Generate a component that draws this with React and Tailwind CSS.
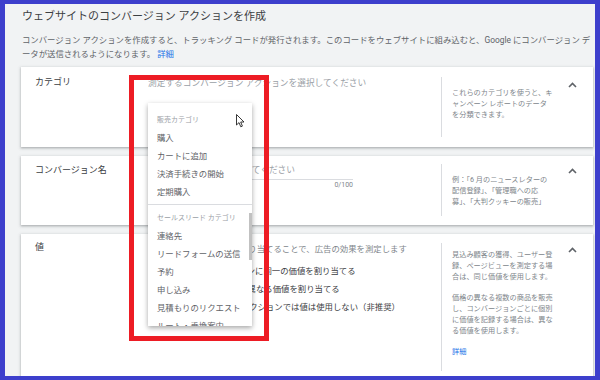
import React from 'react'

const salesItems = ['購入', 'カートに追加', '決済手続きの開始', '定期購入']
const leadItems = ['連絡先', 'リードフォームの送信', '予約', '申し込み', '見積もりのリクエスト', 'ルート・乗換案内']

function Chevron() {
    return (
        <svg width="9" height="6" viewBox="0 0 9 6" fill="none">
            <path d="M1 5 L4.5 1.5 L8 5" stroke="#5f6368" strokeWidth="1.6" />
        </svg>
    )
}

function Card({ className, label, labelPt, middle, help, dividerY, helpPt, chevronPt }) {
    return (
        <div className={`flex bg-white shadow-[0_1px_2px_rgba(60,64,67,0.3),0_1px_3px_1px_rgba(60,64,67,0.12)] ${className}`}>
            <div className={`w-[127px] shrink-0 pl-[14px] text-[9px] leading-[12px] text-[#3c4043] ${labelPt}`}>{label}</div>
            <div className="w-[293px] shrink-0">{middle}</div>
            <div className={`flex flex-1 justify-between border-l border-[#dadce0] pr-[16px] ${dividerY}`}>
                <div className={`pl-[10px] text-[7.2px] leading-[11px] text-[#80868b] whitespace-nowrap ${helpPt}`}>{help}</div>
                <div className={chevronPt}><Chevron /></div>
            </div>
        </div>
    )
}

function Radio({ text }) {
    return (
        <div className="flex h-[18px] items-center">
            <div className="mr-[6px] h-[10px] w-[10px] rounded-full border border-[#5f6368]"></div>
            <span className="text-[8.4px] text-[#3c4043]">{text}</span>
        </div>
    )
}

export default function App() {
    return (
        <div className="relative h-[380px] w-[600px] overflow-hidden border-x-[5px] border-y-[4px] border-[#3d3fcc] bg-[#f1f3f4] font-['Roboto','Noto_Sans_CJK_JP',sans-serif]">
            <div className="pl-[16px] pr-[2px]">
                <div className="pl-[1px] pt-[6px] text-[11px] leading-[14px] text-[#3c4043] whitespace-nowrap">
                    ウェブサイトのコンバージョン アクションを作成
                </div>
                <div className="mt-[10px] pl-[1px] text-[8.4px] leading-[13.5px] text-[#5f6368] whitespace-nowrap">
                    <div>コンバージョン アクションを作成すると、トラッキング コードが発行されます。このコードをウェブサイトに組み込むと、Google にコンバージョン デ</div>
                    <div>ータが送信されるようになります。 <span className="text-[#1a73e8]">詳細</span></div>
                </div>

                <div className="mt-[6px] flex flex-col gap-[9px]">
                    <Card
                        className="h-[80px]"
                        label="カテゴリ"
                        labelPt="pt-[9px]"
                        middle={<div className="pt-[10px] text-[8.7px] leading-[12px] text-[#9aa0a6] whitespace-nowrap">測定するコンバージョン アクションを選択してください</div>}
                        dividerY="my-[10px]"
                        helpPt="pt-[10px]"
                        chevronPt="pt-[5px]"
                        help={<>これらのカテゴリを使うと、キ<br />ャンペーン レポートのデータ<br />を分類できます。</>}
                    />
                    <Card
                        className="h-[69px]"
                        label="コンバージョン名"
                        labelPt="pt-[8px]"
                        middle={
                            <div className="w-[205px] pt-[8px]">
                                <div className="border-b border-[#dadce0] pb-[3px] text-[8.7px] leading-[12px] text-[#9aa0a6] whitespace-nowrap">コンバージョン名を入力してください</div>
                                <div className="mt-[1px] text-right text-[7px] leading-[9px] text-[#80868b]">0/100</div>
                            </div>
                        }
                        dividerY="mt-[8px] mb-[9px]"
                        helpPt="pt-[9.5px]"
                        chevronPt="pt-[4px]"
                        help={<>例：「6 月のニュースレターの<br />配信登録」、「管理職への応<br />募」、「大判クッキーの販売」</>}
                    />
                    <Card
                        className="h-[200px]"
                        label="値"
                        labelPt="pt-[7px]"
                        middle={
                            <div className="pt-[9px]">
                                <div className="text-[8.4px] leading-[12px] text-[#80868b] whitespace-nowrap">コンバージョンに価値を割り当てることで、広告の効果を測定します</div>
                                <div className="mt-[7px] whitespace-nowrap">
                                    <Radio text="すべてのコンバージョンに同一の価値を割り当てる" />
                                    <Radio text="コンバージョンごとに異なる価値を割り当てる" />
                                    <Radio text="このコンバージョン アクションでは値は使用しない（非推奨）" />
                                </div>
                            </div>
                        }
                        dividerY="mt-[9px] mb-[63px]"
                        helpPt="pt-[6px]"
                        chevronPt="pt-[4px]"
                        help={
                            <>
                                <div>見込み顧客の獲得、ユーザー登<br />録、ページビューを測定する場<br />合は、同じ価値を使用します。</div>
                                <div className="mt-[10px]">価格の異なる複数の商品を販売<br />し、コンバージョンごとに個別<br />に価値を記録する場合は、異な<br />る価値を使用します。</div>
                                <div className="mt-[10px] text-[#1a73e8]">詳細</div>
                            </>
                        }
                    />
                </div>
            </div>

            {/* dropdown */}
            <div className="absolute left-[143px] top-[99px] h-[223px] w-[104px] overflow-hidden bg-white shadow-[0_2px_5px_rgba(0,0,0,0.35)]">
                <div className="pt-[8px]">
                    <div className="flex h-[18px] items-center px-[9px] text-[7px] text-[#9aa0a6]">販売カテゴリ</div>
                    {salesItems.map((s) => (
                        <div key={s} className="flex h-[18px] items-center px-[9px] text-[8.4px] text-[#5f6368] whitespace-nowrap">{s}</div>
                    ))}
                    <div className="mb-[4px] mt-[3px] h-px bg-[#dadce0]"></div>
                    <div className="flex h-[18px] items-center px-[9px] text-[7px] text-[#9aa0a6] whitespace-nowrap">セールスリード カテゴリ</div>
                    {leadItems.map((s) => (
                        <div key={s} className="flex h-[18px] items-center px-[9px] text-[8.4px] text-[#5f6368] whitespace-nowrap">{s}</div>
                    ))}
                </div>
                <div className="absolute right-0 top-[110px] h-[47px] w-[3px] bg-[#c1c1c1]"></div>
            </div>

            {/* cursor */}
            <svg className="absolute left-[231px] top-[110px]" width="9" height="14" viewBox="0 0 9 14">
                <path d="M0.5 0.5 L0.5 11 L3 8.6 L4.8 12.8 L6.4 12.1 L4.7 8 L8 8 Z" fill="#fff" stroke="#222" strokeWidth="0.9" strokeLinejoin="round" />
            </svg>

            {/* red highlight */}
            <div className="absolute left-[124px] top-[71px] h-[266px] w-[140px] border-[5px] border-[#ed1c24]"></div>
        </div>
    )
}
